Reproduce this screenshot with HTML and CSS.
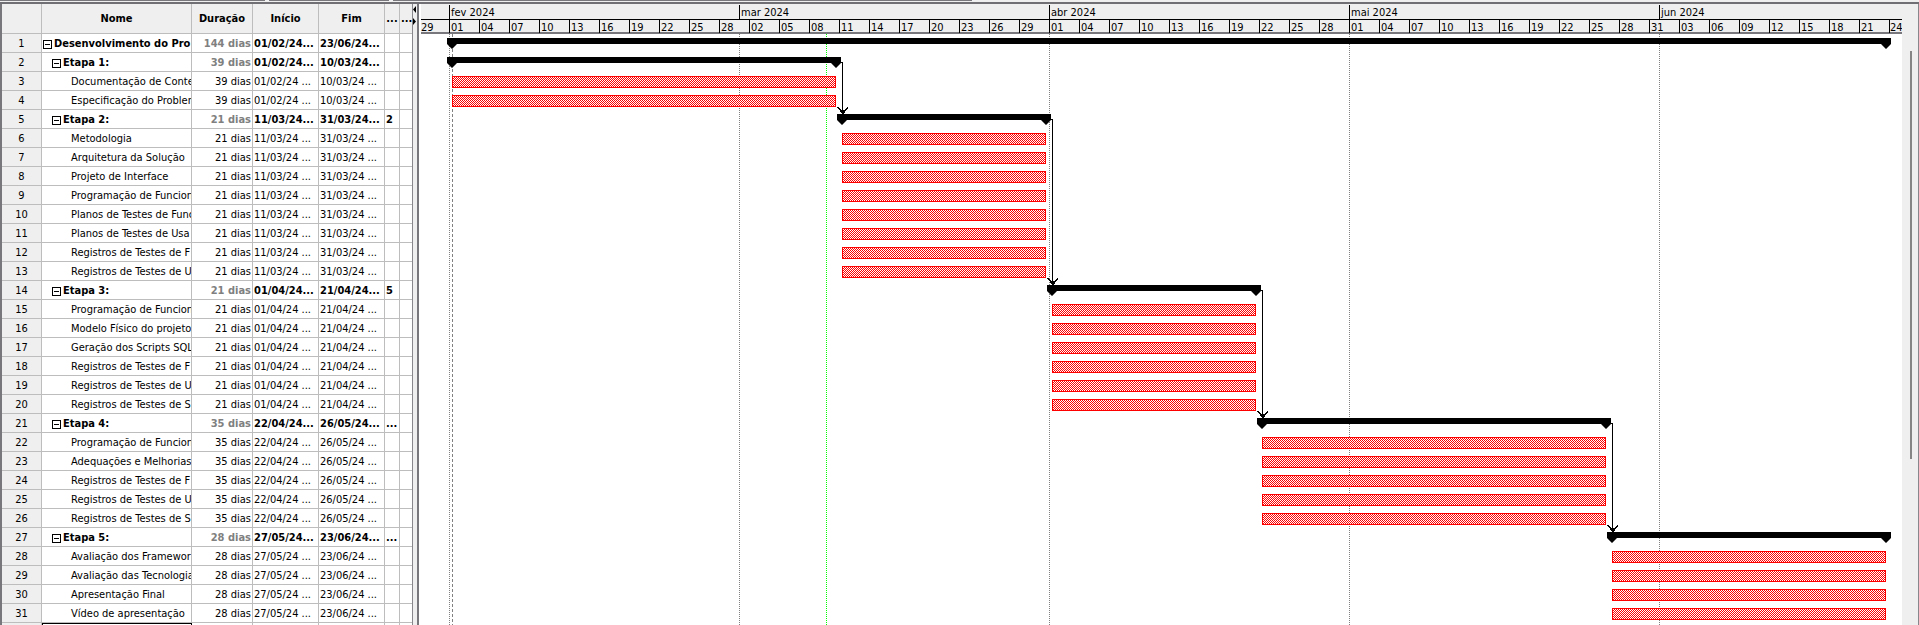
FILE: index.html
```html
<!DOCTYPE html>
<html lang="pt-BR">
<head>
<meta charset="utf-8">
<title>Cronograma</title>
<link rel="stylesheet" href="styles.css">
</head>
<body>
<div class="toolbar-edge"><span></span><span></span><span></span><span></span></div>
<main class="workspace">
  <section class="sheet">
    <table class="tasks">
      <colgroup><col class="c-id"><col class="c-name"><col class="c-dur"><col class="c-date"><col class="c-date"><col class="c-pred"><col></colgroup>
      <thead>
        <tr><th></th><th>Nome</th><th>Duração</th><th>Início</th><th>Fim</th><th>...</th><th>...</th></tr>
      </thead>
      <tbody id="rows"></tbody>
    </table>
  </section>
  <div class="splitter">
    <svg width="4" height="24" viewBox="0 0 4 24"><path d="M3 0v7L0 3.500zM0 12v7l3-3.500z"/></svg>
  </div>
  <section class="gantt">
    <div class="scale">
      <div class="months" id="months"></div>
      <div class="days" id="days"></div>
    </div>
    <div class="chart" id="chart"></div>
  </section>
  <div class="scroll"><div class="thumb"></div></div>
</main>
<script src="script.js"></script>
</body>
</html>
```
FILE: styles.css
```css
* { box-sizing: border-box; }
html, body { height: 100%; }
body {
  margin: 0;
  display: flex;
  flex-direction: column;
  overflow: hidden;
  background: #efefef;
  color: #000;
  font: 11px/16px "DejaVu Sans Condensed", "DejaVu Sans", sans-serif;
}
.toolbar-edge {
  flex: none;
  height: 4px;
  display: grid;
  grid-template-columns: 265px 120px 579px 1fr;
  column-gap: 4px;
  border-bottom: 2px solid #6f6f74;
}
.toolbar-edge span { height: 1px; background: #77777c; }
.toolbar-edge span:last-child { background: none; }
.workspace {
  flex: 1;
  min-height: 0;
  display: flex;
  border-left: 2px solid #77777c;
  border-right: 1px solid #88888c;
}

.sheet { width: 411px; flex: none; overflow: hidden; background: #fff; border-right: 1px solid #88888c; }
.tasks { width: 100%; table-layout: fixed; border-collapse: separate; border-spacing: 0; }
.c-id { width: 40px; }
.c-name { width: 150px; }
.c-dur { width: 61px; }
.c-date { width: 66px; }
.c-pred { width: 15px; }
.tasks th, .tasks td {
  height: 19px;
  padding: 2px 1px 0;
  border: 0 solid #bdbdbd;
  border-width: 0 1px 1px 0;
  overflow: hidden;
  white-space: nowrap;
  text-align: left;
}
.tasks th:last-child, .tasks td:last-child { border-right: 0; }
.tasks thead th { height: 30px; padding: 0 1px; background: #efefef; text-align: center; }
.tasks tbody th { background: #efefef; font-weight: normal; text-align: center; }
.tasks .dur { text-align: right; }
.tasks .group td { font-weight: bold; }
.tasks .group .dur { color: #808080; }
.tasks .selected { border: 1px solid #000; }
.label { display: flex; align-items: center; gap: 2px; }
.level-1 { padding-left: 9px; }
.level-2 { padding-left: 28px; }
.toggle {
  flex: none;
  width: 9px;
  height: 9px;
  padding: 3px 1px;
  border: 1px solid #000;
  background-color: #000;
  background-clip: content-box;
}

.splitter { flex: none; width: 6px; padding-top: 2px; border-right: 2px solid #77777c; background: #efefef; }
.splitter svg { display: block; }

.gantt { flex: 1; min-width: 0; padding-left: 2px; overflow: hidden; background: #fff; }
.scale { height: 30px; padding-top: 1px; background: #efefef; border-bottom: 2px solid #77777c; }
.months, .days { display: flex; overflow: hidden; white-space: nowrap; }
.months { height: 15px; line-height: 15px; border-bottom: 1px solid #000; }
.days { height: 13px; line-height: 15px; }
.months span, .days span { flex: none; width: calc(var(--days) * 10px); padding-left: 1px; border-left: 1px solid #000; }
.months .lead, .days .lead { width: 28px; padding-left: 0; border-left: 0; }
.days span:last-child { padding-left: 0; }

.chart { position: relative; display: flex; flex-direction: column; height: 100%; }
.guide { position: absolute; top: 0; bottom: 0; left: var(--x); width: 1px; background: repeating-linear-gradient(#808080 0 1px, transparent 1px 2px); }
.guide.today { background: repeating-linear-gradient(#0f0 0 1px, transparent 1px 2px); }
.guide.start { background: repeating-linear-gradient(#808080 0 3px, transparent 3px 5px); }
.lane { flex: none; height: 19px; padding-top: 4px; }
.bar {
  position: relative;
  width: var(--w);
  height: 12px;
  margin-left: var(--x);
  border: 1px solid #f00;
  background: repeating-conic-gradient(#f00 0 25%, #fff 0 50%) 0 0 / 2px 2px;
}
.summary {
  position: relative;
  width: var(--w);
  height: 11px;
  margin-left: var(--x);
  background: #000;
  clip-path: polygon(0 0, 100% 0, 100% 6px, calc(100% - 5px) 11px, calc(100% - 10px) 6px, 10px 6px, 5px 11px, 0 6px);
}
.links { position: absolute; inset: 0; width: 100%; height: 100%; fill: none; stroke: #000; shape-rendering: crispEdges; }

.scroll { flex: none; width: 16px; padding: 47px 6px 0 8px; background: #efefef; }
.thumb { height: 71%; background: #858585; }
```
FILE: script.js
```js
// [name, first day, last day, start, end, predecessors, tasks]; days count from 1 February.
const phases = [
  ["Etapa 1:", 0, 38, "01/02/24", "10/03/24", "", ["Documentação de Conte", "Especificação do Problem"]],
  ["Etapa 2:", 39, 59, "11/03/24", "31/03/24", "2", ["Metodologia", "Arquitetura da Solução", "Projeto de Interface", "Programação de Funcion", "Planos de Testes de Func", "Planos de Testes de Usa", "Registros de Testes de F", "Registros de Testes de U"]],
  ["Etapa 3:", 60, 80, "01/04/24", "21/04/24", "5", ["Programação de Funcion", "Modelo Físico do projeto", "Geração dos Scripts SQL", "Registros de Testes de F", "Registros de Testes de U", "Registros de Testes de S"]],
  ["Etapa 4:", 81, 115, "22/04/24", "26/05/24", "...", ["Programação de Funcion", "Adequações e Melhorias", "Registros de Testes de F", "Registros de Testes de U", "Registros de Testes de S"]],
  ["Etapa 5:", 116, 143, "27/05/24", "23/06/24", "...", ["Avaliação dos Framework", "Avaliação das Tecnologia", "Apresentação Final", "Vídeo de apresentação"]]
];
const tasks = [[0, "Desenvolvimento do Pro", 0, 143, "01/02/24", "23/06/24", ""]];
for (const [name, a, b, start, end, pred, children] of phases) {
  tasks.push([1, name, a, b, start, end, pred]);
  for (const child of children) tasks.push([2, child, a, b, start, end, ""]);
}

const origin = 28;
const startX = day => origin + day * 10 + 3;
const endX = day => origin + day * 10 + 7;
const rowHeight = 19;

document.getElementById("rows").innerHTML = tasks.map(([level, name, a, b, start, end, pred], i) => {
  const group = level < 2;
  const dots = group ? "..." : " ...";
  const toggle = group ? `<button class="toggle" aria-label="Recolher ${name}"></button>` : "";
  return `<tr class="${group ? "group" : ""}"><th>${i + 1}</th><td><div class="label level-${level}">${toggle}<span>${name}</span></div></td>` +
    `<td class="dur">${b - a + 1} dias</td><td>${start}${dots}</td><td>${end}${dots}</td><td>${pred}</td><td></td></tr>`;
}).join("") + `<tr><th></th><td class="selected"></td><td></td><td></td><td></td><td></td><td></td></tr>`;

document.getElementById("months").innerHTML = `<span class="lead"></span>` +
  [["fev", 29], ["mar", 31], ["abr", 30], ["mai", 31], ["jun", 30]]
    .map(([m, n]) => `<span style="--days:${n}">${m} 2024</span>`).join("");

let days = `<span class="lead">29</span>`;
for (let d = 0; d <= 144; d += 3) {
  const date = new Date(Date.UTC(2024, 1, 1 + d));
  days += `<span style="--days:3">${String(date.getUTCDate()).padStart(2, "0")}</span>`;
}
document.getElementById("days").innerHTML = days;

const guides = [0, 29, 60, 90, 121].map(d => `<div class="guide" style="--x:${origin + d * 10}px"></div>`).join("") +
  `<div class="guide start" style="--x:${startX(0)}px"></div><div class="guide today" style="--x:${endX(37)}px"></div>`;

const lanes = tasks.map(([level, , a, b]) => {
  const pad = level < 2 ? 5 : 0;
  const x = startX(a) - pad;
  const w = endX(b) + pad - x;
  return `<div class="lane"><div class="${level < 2 ? "summary" : "bar"}" style="--x:${x}px;--w:${w}px"></div></div>`;
}).join("");

// Finish-to-start links between consecutive phases.
const rows = tasks.map((t, i) => t[0] === 1 ? i : -1).filter(i => i > 0);
let path = "";
for (let k = 1; k < rows.length; k++) {
  const from = endX(tasks[rows[k - 1]][3]) + 4;
  const x = startX(tasks[rows[k]][2]);
  const top = rows[k - 1] * rowHeight + 9;
  const tip = rows[k] * rowHeight + 4;
  path += `<path d="M${from} ${top + .5}H${x + .5}V${tip}"/><path fill="#000" stroke="none" d="M${x - 5} ${tip - 7}h1l3 3h3l3-3h1v1l-3 3v1l-2 2h-1l-2-2v-1z"/>`;
}
document.getElementById("chart").innerHTML = guides + lanes + `<svg class="links">${path}</svg>`;
```
